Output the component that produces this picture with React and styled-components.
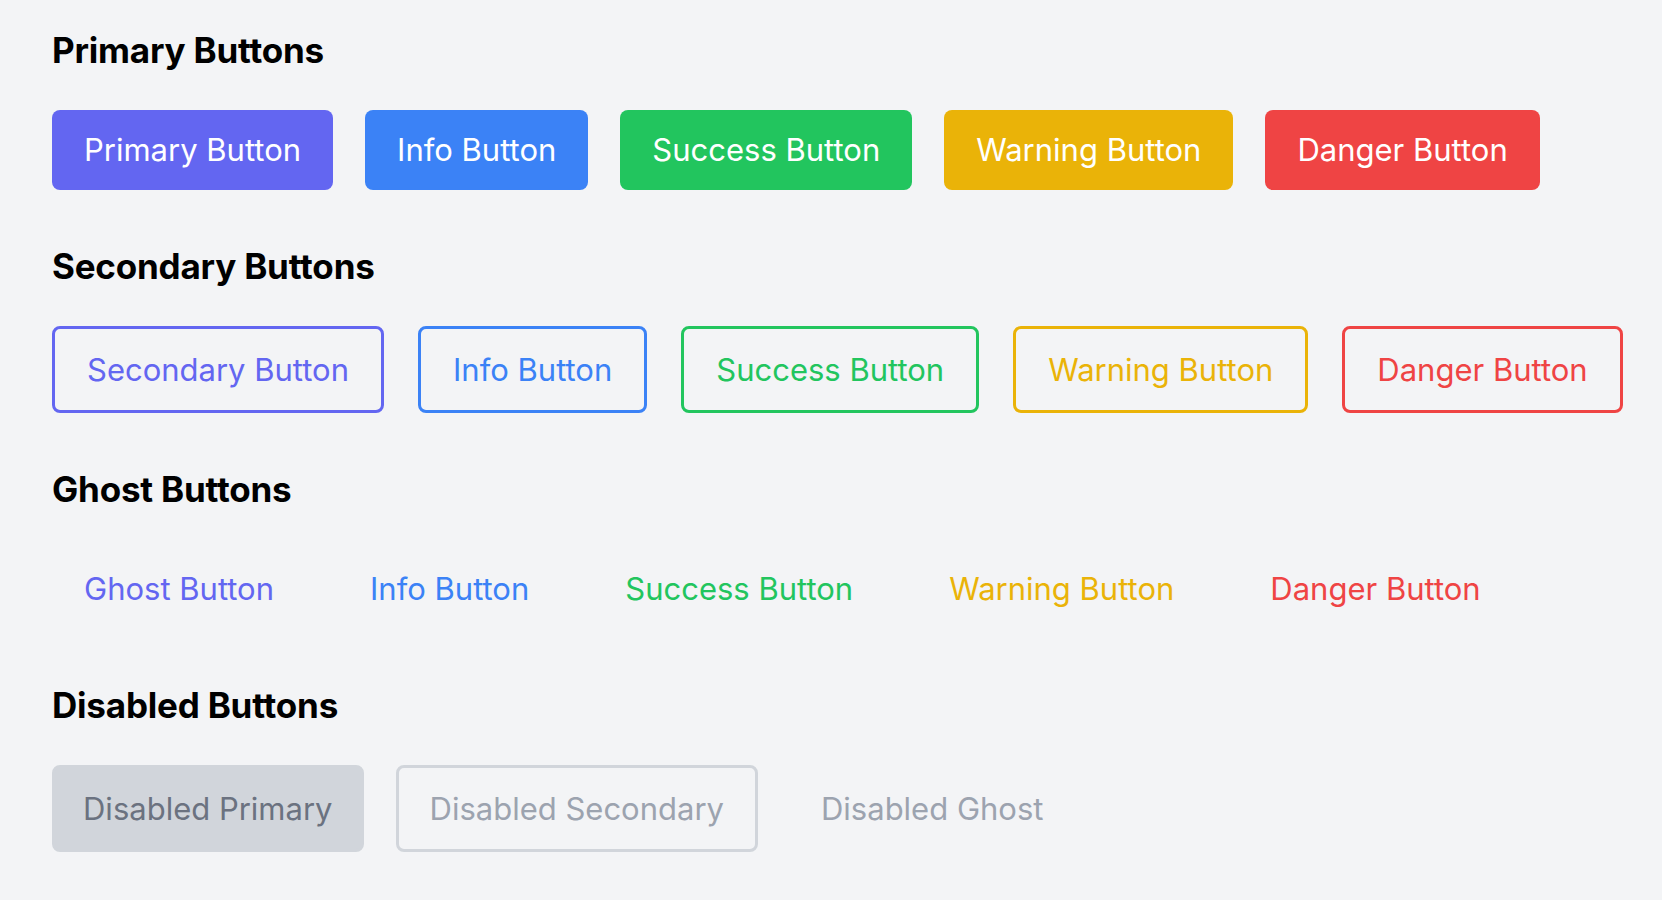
import React from "react";
import styled, { createGlobalStyle, css } from "styled-components";

const GlobalStyle = createGlobalStyle`
  html, body {
    margin: 0;
    padding: 0;
    background: #f3f4f6;
  }
  body {
    font-family: Inter, "Noto Sans", "Liberation Sans", sans-serif;
    color: #000;
  }
`;

const palette = {
  primary: "#6366f1",
  info: "#3b82f6",
  success: "#22c55e",
  warning: "#eab308",
  danger: "#ef4444",
};

const Page = styled.main`
  min-height: 100vh;
  box-sizing: border-box;
  padding: 28px 52px;
  display: flex;
  flex-direction: column;
  gap: 54px;
`;

const Section = styled.section`
  display: flex;
  flex-direction: column;
  gap: 38px;
`;

const Title = styled.h2`
  margin: 0;
  font-size: 35px;
  line-height: 44px;
  font-weight: 700;
  letter-spacing: -0.2px;
`;

const Row = styled.div`
  display: flex;
  align-items: center;
  gap: ${({ $gap = 32 }) => $gap}px;
`;

const baseButton = css`
  box-sizing: border-box;
  flex-shrink: 0;
  white-space: nowrap;
  font-family: inherit;
  font-size: 31px;
  line-height: 32px;
  font-weight: 400;
  border-radius: 8px;
  background: transparent;
`;

const Button = styled.button`
  ${baseButton}
  border: 0;
  padding: 0 32px;
  height: 80px;
  cursor: pointer;

  ${({ $variant, $tone }) => {
    const c = palette[$tone];
    if ($variant === "solid")
      return css`
        background: ${c};
        color: #fff;
      `;
    if ($variant === "outline")
      return css`
        border: 3px solid ${c};
        color: ${c};
        height: 87px;
      `;
    return css`
      color: ${c};
    `;
  }}
`;

const DisabledButton = styled.button`
  ${baseButton}
  height: 87px;
  padding: 0 28px;
  border: 3px solid transparent;
  color: #9ca3af;
  cursor: not-allowed;

  ${({ $variant }) =>
    $variant === "solid" &&
    css`
      background: #d1d5db;
      border-color: #d1d5db;
      color: #6b7280;
    `}
  ${({ $variant }) =>
    $variant === "outline" &&
    css`
      padding: 0 31px;
      border-color: #d1d5db;
    `}
`;

const tones = [
  ["info", "Info Button"],
  ["success", "Success Button"],
  ["warning", "Warning Button"],
  ["danger", "Danger Button"],
];

function ButtonSet({ title, variant, lead, gap }) {
  return (
    <Section>
      <Title>{title}</Title>
      <Row $gap={gap}>
        <Button $variant={variant} $tone="primary">
          {lead}
        </Button>
        {tones.map(([tone, label]) => (
          <Button key={tone} $variant={variant} $tone={tone}>
            {label}
          </Button>
        ))}
      </Row>
    </Section>
  );
}

export default function App() {
  return (
    <>
      <GlobalStyle />
      <Page>
        <ButtonSet title="Primary Buttons" variant="solid" lead="Primary Button" />
        <ButtonSet
          title="Secondary Buttons"
          variant="outline"
          lead="Secondary Button"
          gap={34}
        />
        <ButtonSet title="Ghost Buttons" variant="ghost" lead="Ghost Button" />
        <Section>
          <Title>Disabled Buttons</Title>
          <Row>
            <DisabledButton $variant="solid" disabled>
              Disabled Primary
            </DisabledButton>
            <DisabledButton $variant="outline" disabled>
              Disabled Secondary
            </DisabledButton>
            <DisabledButton $variant="ghost" disabled>
              Disabled Ghost
            </DisabledButton>
          </Row>
        </Section>
      </Page>
    </>
  );
}
